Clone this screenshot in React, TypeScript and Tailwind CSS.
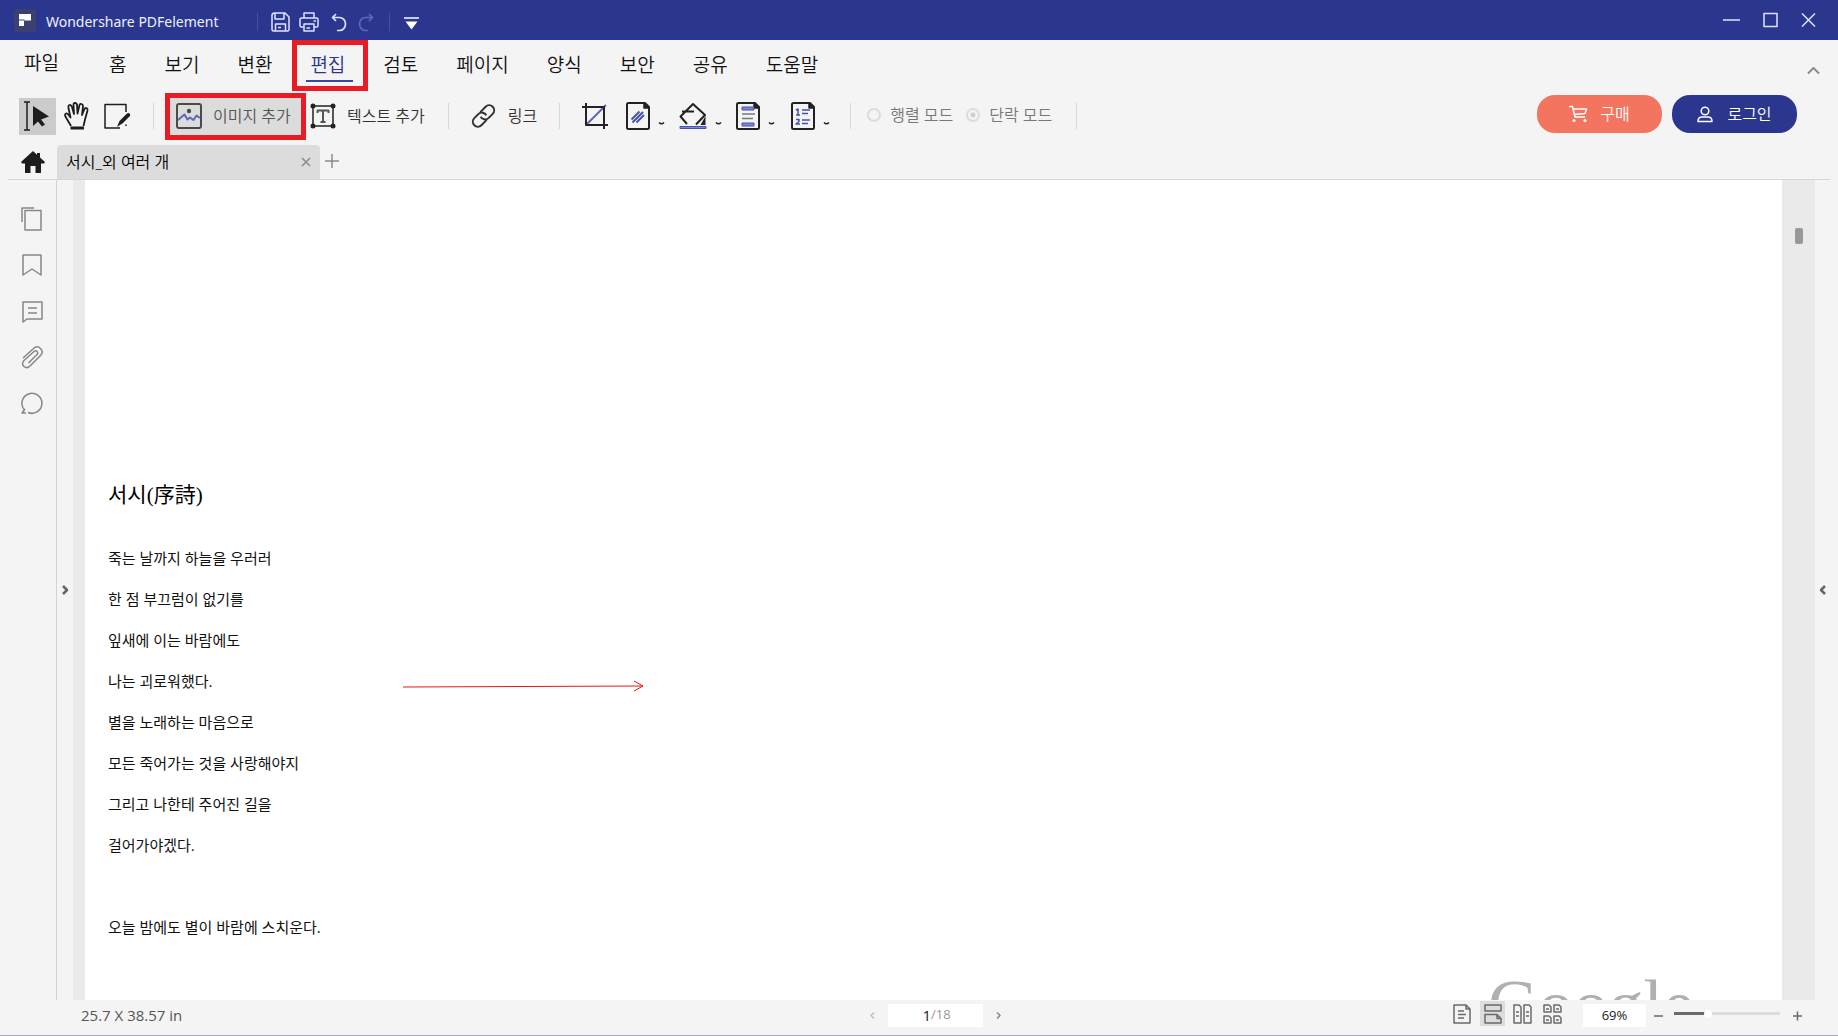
import React, { useState } from "react";
import clsx from "clsx";

const MENUS = ["홈", "보기", "변환", "편집", "검토", "페이지", "양식", "보안", "공유", "도움말"];

const POEM = [
  "죽는 날까지 하늘을 우러러",
  "한 점 부끄럼이 없기를",
  "잎새에 이는 바람에도",
  "나는 괴로워했다.",
  "별을 노래하는 마음으로",
  "모든 죽어가는 것을 사랑해야지",
  "그리고 나한테 주어진 길을",
  "걸어가야겠다.",
  "",
  "오늘 밤에도 별이 바람에 스치운다.",
];

interface IconProps {
  w: number;
  h: number;
  sw?: number;
  className?: string;
  children: React.ReactNode;
}

const Icon = ({ w, h, sw = 1.5, className, children }: IconProps) => (
  <svg
    width={w}
    height={h}
    viewBox={`0 0 ${w} ${h}`}
    fill="none"
    stroke="currentColor"
    strokeWidth={sw}
    strokeLinejoin="round"
    className={clsx("shrink-0", className)}
    aria-hidden="true"
  >
    {children}
  </svg>
);

// red frame drawn around a highlighted control
const Marker = ({ className }: { className: string }) => (
  <span className={clsx("pointer-events-none absolute border-[5px] border-[#e81c24]", className)} />
);

const Divider = ({ className }: { className?: string }) => (
  <div className={clsx("h-[26px] w-px shrink-0 bg-[#d8d8d8]", className)} />
);

const TitleBar = () => (
  <header className="flex h-10 shrink-0 items-center bg-[#2b378f] pl-[14px] pr-[22px] text-[#dfe3fa]">
    <svg width="22" height="23" viewBox="0 0 22 23" className="shrink-0" aria-hidden="true">
      <rect width="22" height="23" rx="4" fill="#3b4070" />
      <path d="M5 5h12v6.500h-7V17H5z" fill="#fff" />
      <path d="M5 11h5.500" stroke="#3b4070" strokeWidth="1" />
    </svg>
    <div className="flex h-10 items-center pt-1">
      <h1 className="ml-[10px] w-[211px] whitespace-nowrap font-['Noto_Sans',sans-serif] text-[14px] leading-6 text-[#eef0fc]">
        Wondershare PDFelement
      </h1>
      <div className="h-[18px] w-px bg-[#46519f]" />
      <button type="button" aria-label="저장" className="ml-[13px]">
        <Icon w={19} h={20}>
          <path d="M1 3.500Q1 1 3.500 1H14l4 4v12.500q0 1.500-1.500 1.500h-14Q1 19 1 17.500zM4 1.500V7h9V1.500M4.500 19v-7h10v7M7 15.500h3" />
        </Icon>
      </button>
      <button type="button" aria-label="인쇄" className="ml-[9px]">
        <Icon w={20} h={20}>
          <path d="M5 6V1h10v5M5 15H2.500Q1 15 1 13.500v-6Q1 6 2.500 6h15Q19 6 19 7.500v6q0 1.500-1.500 1.500H15M5 12h10v7H5zM7.500 16H11M14.500 9H17" />
        </Icon>
      </button>
      <button type="button" aria-label="실행 취소" className="ml-3">
        <Icon w={16} h={19} sw={1.700}>
          <path d="M5 1L1.500 4.500 5 8M2 4.500h6.500a6 6.500 0 0 1 0 13H6" />
        </Icon>
      </button>
      <button type="button" aria-label="다시 실행" className="ml-[11px] text-[#5d68b3]">
        <Icon w={16} h={19} sw={1.700}>
          <path d="M11 1l3.500 3.500L11 8M14 4.500H7.500a6 6.500 0 0 0 0 13H10" />
        </Icon>
      </button>
      <div className="ml-[15px] h-[18px] w-px bg-[#46519f]" />
      <button type="button" aria-label="빠른 실행 도구 모음" className="ml-[14px] mt-1 text-white">
        <Icon w={15} h={14}>
          <path d="M0 1h15" />
          <path d="M1.500 4.500h12l-6 8z" fill="currentColor" stroke="none" />
        </Icon>
      </button>
    </div>
    <div className="ml-auto flex items-center gap-[23px]">
      <button type="button" aria-label="최소화">
        <Icon w={17} h={16}>
          <path d="M0 8h17" />
        </Icon>
      </button>
      <button type="button" aria-label="최대화">
        <Icon w={15} h={16}>
          <path d="M1 1.500h13v13H1z" />
        </Icon>
      </button>
      <button type="button" aria-label="닫기">
        <Icon w={15} h={16}>
          <path d="M1 1.500l13 13M14 1.500L1 14.500" />
        </Icon>
      </button>
    </div>
  </header>
);

const MenuBar = () => {
  const [active, setActive] = useState("편집");

  return (
    <nav className="flex h-[52px] shrink-0 pl-6 pr-[18px] text-[19px] font-[350] leading-6 text-[#111]">
      <button type="button" className="mr-[50px] h-[46px] self-start">
        파일
      </button>
      <div className="flex h-[50px] gap-[38px]">
        {MENUS.map((menu) => (
          <button
            key={menu}
            type="button"
            onClick={() => setActive(menu)}
            className={clsx("relative whitespace-nowrap", menu === active && "text-[#2b378f]")}
          >
            {menu}
            {menu === active && (
              <>
                <span className="absolute -left-1 -right-2 top-10 h-[2px] bg-[#3a469f]" />
                <Marker className="-left-[18px] -right-[23px] top-0 h-[51px]" />
              </>
            )}
          </button>
        ))}
      </div>
      <button type="button" aria-label="리본 접기" className="ml-auto mt-[26px] self-start text-[#8a8a8a]">
        <Icon w={13} h={9} sw={2} className="block">
          <path d="M1 7.500l5.500-5.500L12 7.500" />
        </Icon>
      </button>
    </nav>
  );
};

const Caret = () => (
  <Icon w={7} h={4} className="mb-1 ml-2 self-end text-[#222]">
    <path d="M1 .500Q3.500 3 6 .500" />
  </Icon>
);

const PageShape = () => (
  <>
    <path d="M1 2.500Q1 1 2.500 1H19l4 4v20.500q0 1.500-1.500 1.500h-19Q1 27 1 25.500z" strokeWidth="2" />
    <path d="M18 1v5h5z" fill="currentColor" />
  </>
);

const ToolBar = () => {
  const [mode, setMode] = useState("단락 모드");

  return (
    <div className="flex h-12 shrink-0 items-center whitespace-nowrap pl-[19px] pr-[41px] text-[16px] font-[350] leading-6 text-[#333]">
      <button type="button" aria-label="선택" className="flex h-[37px] w-[37px] items-center bg-[#cbcbcb] pl-[5px] text-[#1d1d1d]">
        <Icon w={28} h={30}>
          <path d="M0 1h6M0 29h6M3 1v28" />
          <path d="M9 5v20l5-4.500 4 5 3-2-4-5 8-3z" fill="currentColor" stroke="none" />
        </Icon>
      </button>
      <button type="button" aria-label="손" className="ml-2 text-[#1d1d1d]">
        <Icon w={26} h={28} sw={1.800}>
          <path d="M7 24L2 15.500q-2-3 0-4 1.500-.5 3 2l1.500 2L4.500 6q-.5-2.500 1-3t2.500 2L10 12l-.5-9.500q0-1.500 1.500-1.500t2 1.500l.5 9L15.500 3Q16 1.500 17.500 2T19 4l-1 9 2.500-6q.7-1.500 2-1t1 2.500L21 17.500 19.500 24" />
          <path d="M6.500 24.500h13.500v3H6.500z" fill="currentColor" stroke="none" />
        </Icon>
      </button>
      <button type="button" aria-label="편집" className="ml-[14px] text-[#1d1d1d]">
        <Icon w={27} h={27}>
          <path d="M22 9V1.500H1V25h15M22 21.500V23" />
          <path d="M13 24l2.500-6L23 10.500q1.500-1 2.500 0t.5 2.500L19 20z" fill="currentColor" stroke="none" />
        </Icon>
      </button>
      <Divider className="ml-[22px]" />
      <button type="button" className="relative ml-4 flex h-[37px] w-[131px] items-center gap-[11px] bg-[#dcdcdc] pl-[6px] text-[#555]">
        <Icon w={26} h={26} sw={2} className="text-[#4a4a4a]">
          <rect x="1" y="1" width="24" height="24" rx="2" />
          <circle cx="13" cy="8" r="2.200" fill="currentColor" stroke="none" />
          <path d="M2 17l6.500-5.500 3 5 2.500-2 3.500 2.500 3-4.500L24 15" stroke="#5b66b5" />
        </Icon>
        이미지 추가
        <Marker className="-inset-[5px]" />
      </button>
      <button type="button" className="ml-[9px] flex items-center gap-[11px]">
        <Icon w={26} h={26} className="text-[#222]">
          <path d="M3 3h20v20H3z" />
          <path d="M7.500 10V7.500h11V10M13 7.500V19M10.500 19h5" stroke="#555" strokeWidth="2" />
          <g fill="currentColor" stroke="none">
            <circle cx="3" cy="3" r="2.500" />
            <circle cx="23" cy="3" r="2.500" />
            <circle cx="3" cy="23" r="2.500" />
            <circle cx="23" cy="23" r="2.500" />
          </g>
        </Icon>
        텍스트 추가
      </button>
      <Divider className="ml-[23px]" />
      <button type="button" className="ml-[22px] flex items-center gap-3">
        <Icon w={25} h={26} sw={2}>
          <g transform="rotate(-45 12.5 13)">
            <path d="M12 18H4.500a5 5 0 0 1 0-10h6a5 5 0 0 1 4.500 6.500" />
            <path d="M13 8h7.500a5 5 0 0 1 0 10h-6A5 5 0 0 1 10 11.500" />
          </g>
        </Icon>
        링크
      </button>
      <Divider className="ml-[22px]" />
      <button type="button" aria-label="자르기" className="ml-[22px] text-[#222]">
        <Icon w={26} h={26} sw={2}>
          <path d="M4 22L24 2" stroke="#5b66b5" />
          <path d="M4 0v22h22M0 4h22v22" />
        </Icon>
      </button>
      <button type="button" aria-label="워터마크" className="ml-[18px] flex h-7 items-center text-[#222]">
        <Icon w={24} h={28}>
          <PageShape />
          <path d="M5.500 17.500l8-8M6.500 20.500L17 10M10.500 20.500L18 13" stroke="#4652ad" strokeWidth="2" />
        </Icon>
        <Caret />
      </button>
      <button type="button" aria-label="배경" className="ml-[14px] flex h-7 items-center text-[#222]">
        <Icon w={28} h={28} sw={2}>
          <path d="M8 22L1.500 14.500 14 2l12 11-9 9.500M3 9.500h12" />
          <path d="M26.500 14v9h-5z" fill="currentColor" stroke="none" />
          <path d="M1 24.500h26v2H1z" fill="#7d88dd" stroke="#4652ad" strokeWidth="1" />
        </Icon>
        <Caret />
      </button>
      <button type="button" aria-label="머리글 및 바닥글" className="ml-[14px] flex h-7 items-center text-[#222]">
        <Icon w={24} h={28}>
          <PageShape />
          <path d="M6 5h12v3H6zM6 21h12v3H6z" fill="#7d88dd" stroke="#4652ad" strokeWidth="1" />
          <path d="M6 12h13M6 16.500h11" stroke="#777" strokeWidth="1.500" />
        </Icon>
        <Caret />
      </button>
      <button type="button" aria-label="베이츠 번호" className="ml-4 flex h-7 items-center text-[#222]">
        <Icon w={24} h={28}>
          <PageShape />
          <path d="M5 8l2-1v6M5 13h4M5 17.500h3v2L5 22h4M11 8h8M11 11.500h6M11 18h8M11 21.500h6" stroke="#4652ad" />
        </Icon>
        <Caret />
      </button>
      <Divider className="ml-5" />
      <div className="mb-[2px] ml-4 flex gap-[13px] text-[#777]">
        {["행렬 모드", "단락 모드"].map((name) => (
          <label key={name} className="flex items-center gap-[9px]">
            <input
              type="radio"
              name="mode"
              disabled
              checked={mode === name}
              onChange={() => setMode(name)}
              className="h-[14px] w-[14px] appearance-none rounded-full border-2 border-[#dcdcdc] checked:bg-[radial-gradient(circle,#cfcfcf_2px,transparent_3px)]"
            />
            {name}
          </label>
        ))}
      </div>
      <Divider className="ml-6" />
      <div className="mb-1 ml-auto flex gap-[10px] text-white">
        <button type="button" className="flex h-[38px] w-[125px] items-center justify-center gap-3 rounded-[18px] bg-[#f37560]">
          <Icon w={19} h={18}>
            <path d="M0 1.500h3.500L6 12h10M4 4h13.500L16 8.500 5.500 9.500" />
            <circle cx="5" cy="15.500" r="1.500" fill="currentColor" stroke="none" />
            <circle cx="16" cy="15.500" r="1.500" fill="currentColor" stroke="none" />
          </Icon>
          구매
        </button>
        <button type="button" className="flex h-[38px] w-[125px] items-center justify-center gap-[14px] rounded-[18px] bg-[#2b378f]">
          <Icon w={16} h={17}>
            <circle cx="8" cy="5" r="3.800" />
            <path d="M1 15.500q0-4.500 4-4.500h6q4 0 4 4.500z" />
          </Icon>
          로그인
        </button>
      </div>
    </div>
  );
};

const TabBar = () => (
  <div className="mx-2 flex h-10 shrink-0 items-end border-b border-[#d6d6d6]">
    <button type="button" aria-label="홈" className="mb-[6px] ml-3 w-[37px] text-[#1d1d1d]">
      <Icon w={24} h={22} className="ml-px">
        <path d="M12 0l4 3.700V2h3v4.500l5 4.500-1 1.500h-3V22h-5.500v-7h-5v7H4v-9.500H1L0 11z" fill="currentColor" stroke="none" />
      </Icon>
    </button>
    <div className="flex h-[34px] w-[263px] items-center rounded-t bg-[#dcdcdc] pl-[9px] pr-[9px] text-[16px] font-[350] leading-6 text-black">
      <span className="whitespace-nowrap">서시_외 여러 개</span>
      <button type="button" aria-label="탭 닫기" className="ml-auto text-[#8a8a8a]">
        <Icon w={10} h={10}>
          <path d="M1 1l8 8M9 1L1 9" />
        </Icon>
      </button>
    </div>
    <button type="button" aria-label="새 탭" className="mb-[11px] ml-[5px] text-[#8a8a8a]">
      <Icon w={14} h={14}>
        <path d="M7 0v14M0 7h14" />
      </Icon>
    </button>
  </div>
);

const SideBar = () => (
  <aside className="flex w-[57px] shrink-0 flex-col items-center gap-[22px] border-r border-[#d3d3d3] pl-[7px] pt-[27px] text-[#868686]">
    <button type="button" aria-label="썸네일">
      <Icon w={22} h={24}>
        <path d="M4 3.500h16v19.500H4z" />
        <path d="M1 15V1h12" />
      </Icon>
    </button>
    <button type="button" aria-label="책갈피">
      <Icon w={22} h={24}>
        <path d="M2 2h18v20l-9-6-9 6z" />
      </Icon>
    </button>
    <button type="button" aria-label="주석">
      <Icon w={22} h={24}>
        <path d="M2 3h19v17H6l-4 3zM7 9h9M7 14h9" />
      </Icon>
    </button>
    <button type="button" aria-label="첨부 파일">
      <Icon w={22} h={24}>
        <path d="M2 13L12 4q4-4 7.500-.5t0 7L9 21q-3 3-6 .5t0-6L13 6.500q1.500-1.500 3 0t0 3L7.500 18" />
      </Icon>
    </button>
    <button type="button" aria-label="검색">
      <Icon w={22} h={24}>
        <path d="M3.500 19a10 10 0 1 1 3.500 2.500M4 18l-3 4h4" />
      </Icon>
    </button>
  </aside>
);

const DocumentPage = () => (
  <article className="relative min-w-0 flex-1 overflow-hidden bg-white pl-[23px] pt-[300px] text-[15px] leading-[41px] text-[#111]">
    <h2 className="mb-7 font-['Liberation_Serif','Noto_Sans_CJK_KR',serif] text-[21px] leading-[30px] text-black">
      서시(序詩)
    </h2>
    {POEM.map((line, i) => (
      <p key={i} className="h-[41px] whitespace-nowrap">
        {line}
      </p>
    ))}
    <Icon w={242} h={12} sw={1} className="absolute left-[318px] top-[500px] text-[#e01818]">
      <path d="M0 7L240 6M231 1l9 5-9 5" />
    </Icon>
    <span className="absolute -bottom-10 right-[58px] w-[236px] font-['Liberation_Serif',serif] text-[70px] leading-[70px] text-[#b0b0b0]">
      Google
    </span>
  </article>
);

const Workspace = () => (
  <main className="flex min-h-0 flex-1">
    <SideBar />
    <button type="button" aria-label="패널 펼치기" className="flex w-4 shrink-0 items-center justify-center text-[#666]">
      <Icon w={7} h={10} sw={2.500}>
        <path d="M1 1l4 4-4 4" />
      </Icon>
    </button>
    <div className="flex min-w-0 flex-1 bg-[#eaeaea] pl-3">
      <DocumentPage />
      <div className="w-[33px] shrink-0 pl-[13px] pt-12">
        <div className="h-4 w-2 rounded-[2px] bg-[#989898]" />
      </div>
    </div>
    <button type="button" aria-label="속성 펼치기" className="flex w-[23px] shrink-0 items-center pl-1 text-[#666]">
      <Icon w={7} h={10} sw={2.500}>
        <path d="M6 1L2 5l4 4" />
      </Icon>
    </button>
  </main>
);

const StatusBar = () => (
  <footer className="flex h-9 shrink-0 justify-between border-b border-[#a9a9bd] pl-[81px] pr-[36px] text-[15px] text-[#555]">
    <div className="flex flex-1 items-center pb-1">25.7 X 38.57 in</div>
    <div className="flex items-center pb-[5px] pr-3 text-[#888]">
      <button type="button" aria-label="이전 페이지" className="text-[#c0c0c0]">
        <Icon w={5} h={7}>
          <path d="M4 .5l-3 3 3 3" />
        </Icon>
      </button>
      <label className="ml-[13px] flex h-[23px] w-[95px] items-center bg-white text-[13px] text-[#999]">
        <input
          type="text"
          aria-label="페이지"
          defaultValue="1"
          className="w-[43px] bg-transparent text-right text-[15px] text-[#222] outline-none"
        />
        /18
      </label>
      <button type="button" aria-label="다음 페이지" className="ml-[13px]">
        <Icon w={5} h={7}>
          <path d="M1 .5l3 3-3 3" />
        </Icon>
      </button>
    </div>
    <div className="flex flex-1 items-center justify-end pb-2 text-[#6a6a6a]">
      <button type="button" aria-label="한 페이지 보기" className="mr-[9px]">
        <Icon w={18} h={20}>
          <path d="M1 1h12l4 4v14H1zM13 1v4h4M5 7h6M5 10.500h8M5 14h6" />
        </Icon>
      </button>
      <button type="button" aria-label="연속 보기" className="flex h-[25px] w-[25px] items-center justify-center bg-[#dcdcdc]">
        <Icon w={18} h={20}>
          <path d="M1 1h16v6H1zM1 10.500h12l4 4v4.500H1zM13 10.500v4h4" />
        </Icon>
      </button>
      <button type="button" aria-label="두 페이지 보기" className="ml-2">
        <Icon w={19} h={20}>
          <path d="M1 1h5l2 2v16H1zM11 1h5l2 2v16h-7zM3 8h3M3 12h3M13 8h3M13 12h3" />
        </Icon>
      </button>
      <button type="button" aria-label="두 페이지 연속 보기" className="ml-[11px]">
        <Icon w={19} h={20}>
          <path d="M1 1h5l2 2v5H1zM11 1h5l2 2v5h-7zM1 12h5l2 2v5H1zM11 12h5l2 2v5h-7zM3 5h3M13 5h3M3 16h3M13 16h3" />
        </Icon>
      </button>
      <input
        type="text"
        aria-label="확대 비율"
        defaultValue="69%"
        className="ml-[21px] mt-[3px] h-[23px] w-[63px] bg-white text-center text-[13px] text-[#222] outline-none"
      />
      <button type="button" aria-label="축소" className="ml-2 mt-1">
        <Icon w={9} h={10}>
          <path d="M0 5h9" />
        </Icon>
      </button>
      <input
        type="range"
        aria-label="확대/축소"
        min={10}
        max={200}
        defaultValue={69}
        className="ml-[11px] h-[3px] w-[106px] appearance-none bg-[linear-gradient(to_right,#6a6a6a_32%,#dcdcdc_32%)] outline-none [&::-webkit-slider-thumb]:h-2 [&::-webkit-slider-thumb]:w-2 [&::-webkit-slider-thumb]:appearance-none [&::-webkit-slider-thumb]:rounded-full [&::-webkit-slider-thumb]:bg-white"
      />
      <button type="button" aria-label="확대" className="ml-[13px] mt-1">
        <Icon w={9} h={10}>
          <path d="M0 5h9M4.500.500v9" />
        </Icon>
      </button>
    </div>
  </footer>
);

const App = () => (
  <div className="flex h-screen flex-col overflow-hidden bg-[#f4f4f4] font-['Open_Sans','Noto_Sans_CJK_KR',sans-serif]">
    <TitleBar />
    <MenuBar />
    <ToolBar />
    <TabBar />
    <Workspace />
    <StatusBar />
  </div>
);

export default App;
